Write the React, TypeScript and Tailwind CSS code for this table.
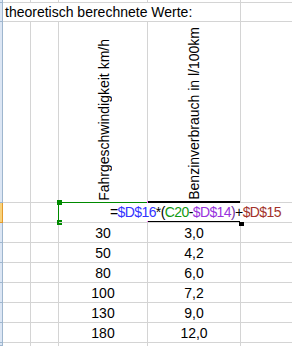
import React from "react";

const G = "border-[#d4d4d4]";

function Hdr({ active = false }: { active?: boolean }) {
  return active ? (
    <div className="w-[3px] shrink-0 bg-[#f9d27a] border-r border-b border-[#e29a2e]" />
  ) : (
    <div className="w-[3px] shrink-0 bg-[#dce6f4] border-r border-b border-[#9eb6ce]" />
  );
}

function DataRow({ a, b }: { a: string; b: string }) {
  return (
    <div className="flex h-[20px]">
      <Hdr />
      <div className={`w-[28px] shrink-0 border-r border-b ${G}`} />
      <div className={`w-[28px] shrink-0 border-r border-b ${G}`} />
      <div className={`w-[89px] shrink-0 border-r border-b ${G} text-center pt-[1px] leading-[18px]`}>{a}</div>
      <div className={`w-[93px] shrink-0 border-r border-b ${G} text-center pt-[1px] leading-[18px]`}>{b}</div>
      <div className={`flex-1 border-b ${G}`} />
    </div>
  );
}

export default function App() {
  const rows: [string, string][] = [
    ["30", "3,0"],
    ["50", "4,2"],
    ["80", "6,0"],
    ["100", "7,2"],
    ["130", "9,0"],
    ["180", "12,0"],
  ];
  return (
    <div
      className="w-[292px] h-[346px] overflow-hidden bg-white text-black text-[14px] flex flex-col"
      style={{ fontFamily: '"Liberation Sans", Arial, sans-serif' }}
    >
      {/* partial top row */}
      <div className="flex h-[3px] shrink-0">
        <Hdr />
        <div className={`w-[28px] shrink-0 border-r border-b ${G}`} />
        <div className={`w-[28px] shrink-0 border-r border-b ${G}`} />
        <div className={`w-[89px] shrink-0 border-r border-b ${G}`} />
        <div className={`w-[93px] shrink-0 border-r border-b ${G}`} />
        <div className={`flex-1 border-b ${G}`} />
      </div>
      {/* title row */}
      <div className="flex h-[19px] shrink-0">
        <Hdr />
        <div className={`w-[238px] shrink-0 border-r border-b ${G} pl-[2px] pt-[1px] leading-[17px] whitespace-nowrap`}>
          theoretisch berechnete Werte:
        </div>
        <div className={`flex-1 border-b ${G}`} />
      </div>
      {/* tall header row */}
      <div className="flex h-[181px] shrink-0">
        <Hdr />
        <div className={`w-[28px] shrink-0 border-r border-b ${G}`} />
        <div className={`w-[28px] shrink-0 border-r border-b ${G}`} />
        <div className={`w-[89px] shrink-0 border-r border-b ${G} flex flex-col justify-end items-center pb-[1px]`}>
          <span className="[writing-mode:vertical-rl] rotate-180 leading-[16px] whitespace-nowrap ml-[2px]">
            Fahrgeschwindigkeit km/h
          </span>
        </div>
        <div className={`w-[93px] shrink-0 border-r border-b ${G} flex flex-col justify-end items-center pb-[2px]`}>
          <span className="[writing-mode:vertical-rl] rotate-180 leading-[16px] whitespace-nowrap">
            Benzinverbrauch in l/100km
          </span>
        </div>
        <div className={`flex-1 border-b ${G}`} />
      </div>
      {/* formula row */}
      <div className="flex h-[20px] shrink-0 relative">
        <Hdr active />
        <div className={`w-[28px] shrink-0 border-r border-b ${G}`} />
        <div className={`w-[28px] shrink-0 border-r border-b ${G}`} />
        <div className={`flex-1 border-b ${G} pl-[51px] pt-[1px] leading-[17px] whitespace-nowrap tracking-[-0.6px] relative z-10`}>
          <span>=</span>
          <span className="text-[#3333ff]">$D$16</span>
          <span>*</span>
          <span>(</span>
          <span className="text-[#119911]">C20</span>
          <span>-</span>
          <span className="text-[#9933dd]">$D$14</span>
          <span className="text-[#7030a0]">)</span>
          <span>+</span>
          <span className="text-[#a3322a]">$D$15</span>
        </div>
        {/* green range border (C20) */}
        <div className="absolute left-[58px] top-[-1px] w-[89px] h-[21px] border border-r-0 border-[#008a00]" />
        <div className="absolute left-[57px] top-[-3px] w-[5px] h-[5px] bg-[#008a00]" />
        <div className="absolute left-[57px] top-[17px] w-[5px] h-[5px] bg-[#008a00]" />
        {/* pink marks */}
        <div className="absolute left-[147px] top-[-2px] w-[1px] h-[2px] bg-[#ff66ff]" />
        <div className="absolute left-[147px] top-[18px] w-[1px] h-[2px] bg-[#ff66ff]" />
        {/* active cell black border */}
        <div className="absolute left-[148px] top-[-2px] w-[92px] h-[2px] bg-black" />
        <div className="absolute left-[148px] top-[18px] w-[92px] h-[2px] bg-black" />
        <div className="absolute left-[239px] top-[19px] w-[5px] h-[4px] bg-black z-20" />
      </div>
      {rows.map(([a, b]) => (
        <DataRow key={a} a={a} b={b} />
      ))}
      <div className="flex flex-1">
        <Hdr />
        <div className={`w-[28px] shrink-0 border-r ${G}`} />
        <div className={`w-[28px] shrink-0 border-r ${G}`} />
        <div className={`w-[89px] shrink-0 border-r ${G}`} />
        <div className={`w-[93px] shrink-0 border-r ${G}`} />
        <div className="flex-1" />
      </div>
    </div>
  );
}
